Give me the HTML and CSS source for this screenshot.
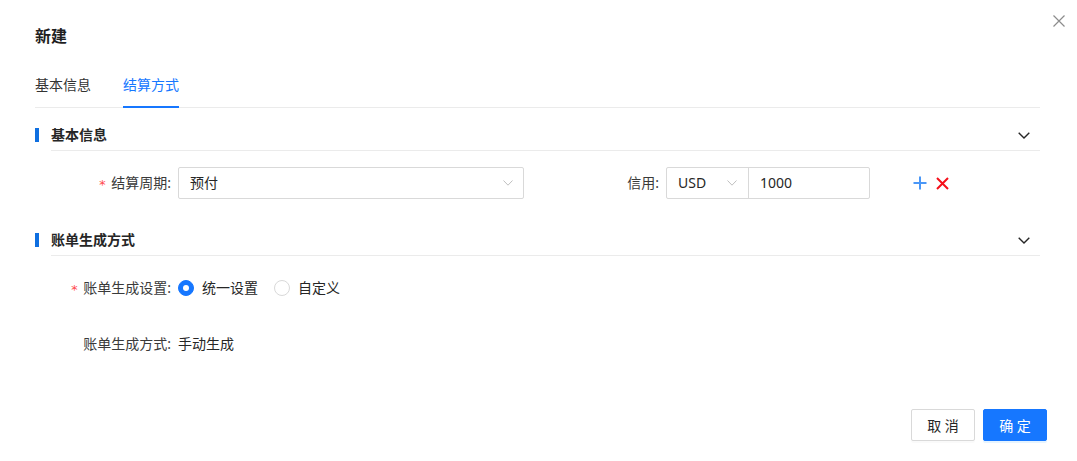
FILE: index.html
```html
<!DOCTYPE html>
<html lang="zh-CN">
<head>
<meta charset="utf-8">
<title>新建</title>
<link rel="stylesheet" href="styles.css">
</head>
<body>
<div class="modal">
  <button class="close" aria-label="关闭">
    <svg width="12" height="12" viewBox="0 0 12 12"><path d="M0.5 0.5 L11.5 11.5 M11.5 0.5 L0.5 11.5" stroke="#8c8c8c" stroke-width="1.2" fill="none"/></svg>
  </button>
  <div class="content">
    <div class="title">新建</div>
    <div class="tabs">
      <div class="tab">基本信息</div>
      <div class="tab active">结算方式</div>
    </div>

    <div class="section">
      <div class="section-head">
        <span class="bar"></span>
        <div class="head-main">
          <span class="head-title">基本信息</span>
          <svg class="chev" width="12" height="7" viewBox="0 0 12 7"><path d="M0.7 0.7 L6 6 L11.3 0.7" stroke="#262626" stroke-width="1.4" fill="none"/></svg>
        </div>
      </div>
      <div class="section-body">
        <div class="row">
          <label class="label"><span class="req">*</span>结算周期:</label>
          <div class="select">
            <span class="val">预付</span>
            <svg width="10" height="6" viewBox="0 0 10 6"><path d="M0.5 0.5 L5 5.2 L9.5 0.5" stroke="#bfbfbf" stroke-width="1" fill="none"/></svg>
          </div>
          <label class="label narrow">信用:</label>
          <div class="group">
            <div class="currency">
              <span class="val">USD</span>
              <svg width="10" height="6" viewBox="0 0 10 6"><path d="M0.5 0.5 L5 5.2 L9.5 0.5" stroke="#bfbfbf" stroke-width="1" fill="none"/></svg>
            </div>
            <div class="amount val">1000</div>
          </div>
          <div class="actions">
            <svg width="14" height="14" viewBox="0 0 14 14"><path d="M7 0.5 V13.5 M0.5 7 H13.5" stroke="#4a97f7" stroke-width="2" fill="none"/></svg>
            <svg width="13" height="13" viewBox="0 0 13 13"><path d="M1 1 L12 12 M12 1 L1 12" stroke="#f5101a" stroke-width="2" fill="none"/></svg>
          </div>
        </div>
      </div>
    </div>

    <div class="section">
      <div class="section-head">
        <span class="bar"></span>
        <div class="head-main">
          <span class="head-title">账单生成方式</span>
          <svg class="chev" width="12" height="7" viewBox="0 0 12 7"><path d="M0.7 0.7 L6 6 L11.3 0.7" stroke="#262626" stroke-width="1.4" fill="none"/></svg>
        </div>
      </div>
      <div class="section-body">
        <div class="row">
          <label class="label"><span class="req">*</span>账单生成设置:</label>
          <div class="radios">
            <span class="radio-item"><span class="radio checked"></span><span class="val">统一设置</span></span>
            <span class="radio-item"><span class="radio"></span><span class="val">自定义</span></span>
          </div>
        </div>
        <div class="row">
          <label class="label">账单生成方式:</label>
          <span class="val">手动生成</span>
        </div>
      </div>
    </div>
  </div>
  <div class="footer">
    <button class="btn">取 消</button>
    <button class="btn primary">确 定</button>
  </div>
</div>
</body>
</html>
```

FILE: styles.css
```css
html, body {
  margin: 0;
  padding: 0;
  background: #fff;
}
body {
  font-family: "Noto Sans", "Noto Sans CJK SC", sans-serif;
  font-size: 14px;
  color: #262626;
}
.modal {
  position: relative;
  box-sizing: border-box;
  width: 1077px;
  height: 461px;
  padding: 24px 30px 0 35px;
}
.close {
  position: absolute;
  top: 15px;
  right: 12px;
  width: 12px;
  height: 12px;
  padding: 0;
  border: 0;
  background: none;
  display: flex;
}
.content {
  margin-right: 7px;
}
.title {
  font-size: 16px;
  line-height: 24px;
  font-weight: 600;
  color: #1f1f1f;
}
.tabs {
  margin-top: 16px;
  display: flex;
  gap: 32px;
  border-bottom: 1px solid #ebebeb;
}
.tab {
  position: relative;
  padding: 10px 0 11px;
  line-height: 22px;
  color: #333;
}
.tab.active {
  color: #1677ff;
}
.tab.active::after {
  content: "";
  position: absolute;
  left: 0;
  right: 0;
  bottom: -1px;
  height: 2px;
  background: #1677ff;
}
.section-head {
  display: flex;
  padding-top: 16px;
}
.bar {
  width: 4px;
  height: 14px;
  margin-top: 4px;
  margin-right: 12px;
  background: #0f6fe0;
  flex: none;
}
.head-main {
  flex: 1;
  display: flex;
  justify-content: space-between;
  align-items: center;
  line-height: 22px;
  padding: 0 10px 4px 0;
  border-bottom: 1px solid #ebebeb;
}
.head-title {
  font-weight: 600;
  color: #262626;
}
.section-body {
  padding: 16px 0 14px;
  display: flex;
  flex-direction: column;
  gap: 24px;
}
.row {
  display: flex;
  align-items: center;
  height: 32px;
}
.label {
  width: 143px;
  box-sizing: border-box;
  padding-right: 7px;
  text-align: right;
  color: #3a3a3a;
  line-height: 22px;
  flex: none;
}
.label.narrow {
  width: 142px;
}
.req {
  color: #ff4d4f;
  font-family: "DejaVu Sans Mono", monospace;
  font-size: 13px;
  margin-right: 5px;
  position: relative;
  top: 1px;
}
.val {
  color: #262626;
  line-height: 22px;
}
.select {
  width: 346px;
  height: 32px;
  box-sizing: border-box;
  border: 1px solid #d9d9d9;
  border-radius: 2px;
  padding: 0 10px 0 11px;
  display: flex;
  align-items: center;
  justify-content: space-between;
  flex: none;
}
.group {
  width: 204px;
  height: 32px;
  box-sizing: border-box;
  border: 1px solid #d9d9d9;
  border-radius: 2px;
  display: flex;
  flex: none;
}
.currency {
  width: 82px;
  box-sizing: border-box;
  border-right: 1px solid #d9d9d9;
  padding: 0 11px;
  display: flex;
  align-items: center;
  justify-content: space-between;
}
.amount {
  flex: 1;
  padding: 0 11px;
  display: flex;
  align-items: center;
}
.actions {
  margin-left: 43px;
  display: flex;
  align-items: center;
  gap: 9px;
}
.radios {
  display: flex;
  align-items: center;
  gap: 16px;
}
.radio-item {
  display: flex;
  align-items: center;
  gap: 8px;
}
.radio {
  width: 16px;
  height: 16px;
  box-sizing: border-box;
  border: 1px solid #d9d9d9;
  border-radius: 50%;
  background: #fff;
  display: flex;
  align-items: center;
  justify-content: center;
}
.radio.checked {
  border-color: #1677ff;
  background: #1677ff;
}
.radio.checked::after {
  content: "";
  width: 6px;
  height: 6px;
  border-radius: 50%;
  background: #fff;
}
.footer {
  margin-top: 35px;
  display: flex;
  justify-content: flex-end;
  gap: 8px;
}
.btn {
  width: 64px;
  height: 32px;
  box-sizing: border-box;
  border: 1px solid #d9d9d9;
  border-radius: 2px;
  background: #fff;
  color: #262626;
  font-family: "Noto Sans", "Noto Sans CJK SC", sans-serif;
  font-size: 14px;
  padding: 0;
  box-shadow: 0 2px 0 rgba(0, 0, 0, 0.02);
}
.btn.primary {
  background: #1677ff;
  border-color: #1677ff;
  color: #fff;
  box-shadow: 0 2px 0 rgba(5, 145, 255, 0.1);
}
```
